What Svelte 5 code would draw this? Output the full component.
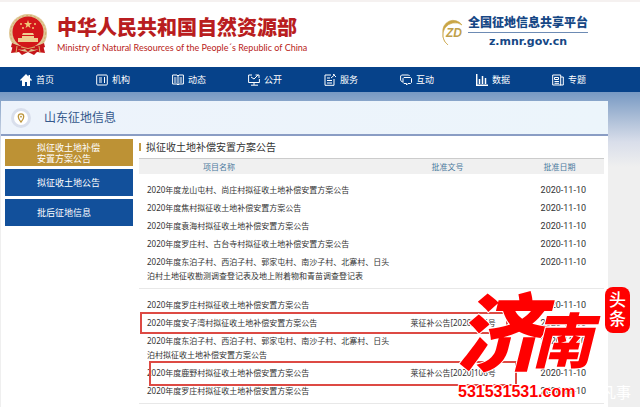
<script>
  const nav = [
    { label: '首页', icon: 'home' },
    { label: '机构', icon: 'org' },
    { label: '动态', icon: 'book' },
    { label: '公开', icon: 'screen' },
    { label: '服务', icon: 'service' },
    { label: '互动', icon: 'chat' },
    { label: '数据', icon: 'chart' },
    { label: '专题', icon: 'news' }
  ];
  const groups = [
    [
      ['2020年度龙山屯村、尚庄村拟征收土地补偿安置方案公告', ''],
      ['2020年度焦村拟征收土地补偿安置方案公告', ''],
      ['2020年度袁海村拟征收土地补偿安置方案公告', ''],
      ['2020年度罗庄村、古台寺村拟征收土地补偿安置方案公告', ''],
      ['2020年度东泊子村、西泊子村、郭家屯村、南沙子村、北寨村、日头泊村土地征收勘测调查登记表及地上附着物和青苗调查登记表', '']
    ],
    [
      ['2020年度罗庄村拟征收土地补偿安置方案公告', ''],
      ['2020年度安子湾村拟征收土地补偿安置方案公告', '莱征补公告[2020]105号'],
      ['2020年度东泊子村、西泊子村、郭家屯村、南沙子村、北寨村、日头泊村拟征收土地补偿安置方案公告', ''],
      ['2020年度鹿野村拟征收土地补偿安置方案公告', '莱征补公告[2020]106号'],
      ['2020年度罗庄村拟征收土地补偿安置方案公告', '']
    ]
  ];
</script>

<div class="page">
  <header>
    <svg class="emblem" viewBox="0 0 40 42" aria-hidden="true">
      <path d="M6 27 3 39l8-1 3 3 6-3 6 3 3-3 8 1-3-12z" fill="#c5161a" />
      <circle cx="20" cy="19" r="19" fill="#e0c795" />
      <circle cx="20" cy="19" r="17.500" fill="none" stroke="#cfae6e" stroke-dasharray="2 2" />
      <circle cx="20" cy="18" r="15.500" fill="#d3171a" />
      <path d="m20 6 1 3h3l-2.400 2 .9 3-2.500-1.800-2.500 1.800.9-3L16 9h3z" fill="#f0c878" />
      <g fill="#f0c878"><circle cx="13" cy="10" r="1" /><circle cx="27" cy="10" r="1" /><circle cx="15" cy="14" r="1" /><circle cx="25" cy="14" r="1" /></g>
      <path d="M15 19h10l1 2H14zM14 22h12v2h4v4H10v-4h4z" fill="#efcf91" />
      <path d="M4 29q16 8 32 0l1 4q-9 4-14 2l-3 3-3-3q-5 2-14-2z" fill="#c5161a" />
      <path d="M13 33q7 3 14 0M9 32l-1 7M31 32l1 7" fill="none" stroke="#dfae68" />
    </svg>
    <div class="ministry">
      <h1>中华人民共和国自然资源部</h1>
      <p>Ministry of Natural Resources of the People´s Republic of China</p>
    </div>
    <a class="platform" href="#platform">
      <svg viewBox="0 0 28 28" aria-hidden="true">
        <path d="M23 6A12 12 0 1 0 9 26Q3 21 4 14A10.500 10.500 0 0 1 23 6" fill="#c9a545" stroke="#c9a545" stroke-width=".6" />
        <text x="7" y="18">ZD</text>
      </svg>
      <span class="platform-text"><strong>全国征地信息共享平台</strong><span>z.mnr.gov.cn</span></span>
    </a>
  </header>

  <nav>
    {#each nav as item}
      <a href="#{item.icon}">
        <svg viewBox="0 0 12 12" aria-hidden="true">
          {#if item.icon === 'home'}
            <path d="M6 0 0 6l1 1 1-1v6h3V8h2v4h3V6l1 1 1-1-2-2V1H8.500v1.500z" fill="#fff" stroke="none" />
          {:else if item.icon === 'org'}
            <rect x=".7" y="1" width="10.600" height="10" rx="1" /><path d="M3 4h3M3 6h3M3 8h3M8.500 3v6" />
          {:else if item.icon === 'book'}
            <path d="M6 2v9M.6 1H5l1 1 1-1h4.400v9H7l-1 1-1-1H.6zM2 4h2.500M2 6h2.500M2 8h2.500M7.500 4H10M7.500 6H10M7.500 8H10" />
          {:else if item.icon === 'screen'}
            <path d="M4 1H.6v7.500h10.800V5M6 8.500V11M3 11.200h7M3 3l3 2 4-4M7.500 1H11v3" />
          {:else if item.icon === 'service'}
            <path d="M7 1H1v10.300h9V5M3 4h3M3 6.500h5M3 9h5M7 4l4-3.500M9 0l3 3" />
          {:else if item.icon === 'chat'}
            <path d="M2.500 7.500H1.500L.6 6V2l1-1h7l1 1M4 3.500h6.500l1 1v4l-1 1H8L6.500 11V9.500H4l-1-1v-4z" />
          {:else if item.icon === 'chart'}
            <path d="M.7 0v11.200H12M3.500 10V5M6.500 10V2M9.500 10V4" stroke-width="1.500" />
          {:else}
            <path d="M.7 1h8v10h-8zM9 3h2.300v8H8M2.500 3.500h4v2h-4zM2.500 7.500h4.500M2.500 9.300h4.500" />
          {/if}
        </svg>
        {item.label}
      </a>
    {/each}
  </nav>

  <div class="backdrop">
    <main>
      <div class="region">
        <span class="pin">
          <svg viewBox="0 0 8 11" aria-hidden="true"><path d="M4 10Q1 6.500 1 4a3 3 0 0 1 6 0Q7 6.500 4 10z" fill="#fff" stroke="#bd953b" stroke-width="1.400" /><circle cx="4" cy="4" r="1" fill="#bd953b" /></svg>
        </span>
        <h2>山东征地信息</h2>
      </div>
      <div class="columns">
        <aside>
          <a class="active" href="#plan">拟征收土地补偿<br />安置方案公告</a>
          <a href="#land">拟征收土地公告</a>
          <a href="#approved">批后征地信息</a>
        </aside>
        <section>
          <h3>拟征收土地补偿安置方案公告</h3>
          <table>
            <colgroup><col class="c-name" /><col class="c-no" /><col class="c-date" /></colgroup>
            <thead>
              <tr><th>项目名称</th><th>批准文号</th><th>批准日期</th></tr>
            </thead>
            {#each groups as rows}
              <tbody>
                {#each rows as [name, no]}
                  <tr><td><a href="#detail">{name}</a></td><td>{no}</td><td>2020-11-10</td></tr>
                {/each}
              </tbody>
            {/each}
          </table>
          <i class="mark first"></i>
          <i class="mark second"></i>
        </section>
      </div>
    </main>
    <div class="faint">凡事</div>
    <div class="brand">
      <span class="ji">济</span><span class="nan">南</span>
      <span class="site">531531531.com</span>
      <span class="seal">头条</span>
    </div>
  </div>
</div>

<style>
  :global(body) { margin: 0; background: #efefef; }
  .page { font-family: "Noto Sans", "Noto Sans CJK SC", sans-serif; color: #333; overflow: hidden; }
  a { color: inherit; text-decoration: none; }
  h1, h2, h3, p { margin: 0; font-weight: 400; }
  header { box-sizing: border-box; height: 67px; display: flex; align-items: center; padding: 0 52px 0 8px; background: #fff; border-top: 2px solid #f5f1f0; }
  .emblem { width: 40px; height: 42px; margin-right: 9px; }
  .ministry { flex: 1; white-space: nowrap; color: #b91d20; }
  h1 { font-size: 20px; line-height: 26px; font-weight: 900; }
  .ministry p { font-family: Lato, sans-serif; font-size: 9px; line-height: 14px; }
  .platform { display: flex; align-items: center; gap: 1px; color: #164785; margin-top: -4px; }
  .platform svg { flex: none; width: 28px; height: 28px; }
  .platform text { font: italic 700 12px "Liberation Sans", sans-serif; fill: #c0a04a; }
  .platform-text { display: flex; flex-direction: column; align-items: center; }
  .platform strong { font-size: 12px; line-height: 18px; font-weight: 900; border-bottom: 1px solid #6d8bb4; }
  .platform-text span { font: 700 11px/18px "DejaVu Sans", sans-serif; }
  nav { display: grid; grid-template-columns: repeat(8, 1fr); height: 25px; padding: 0 12px 0 20px; background: #06428a; color: #fff; font-size: 9px; }
  nav a { display: flex; align-items: center; gap: 4px; }
  nav svg { width: 12px; height: 12px; fill: none; stroke: #fff; stroke-width: 1; }
  .backdrop { position: relative; padding: 9px 32px 0 1px; background: #efefef linear-gradient(#7799c3, #a9bcd6 25px, #d9deea 50px, #efefef 75px) no-repeat 0 0 / 100% 75px; }
  main { background: #fff; padding-bottom: 3px; }
  .region { display: flex; align-items: center; gap: 13px; height: 33px; padding-left: 10px; background: linear-gradient(90deg, #edf3fb, #ecf5fb); border-bottom: 2px solid #8a9dc4; }
  .pin { display: grid; place-items: center; box-sizing: border-box; width: 20px; height: 20px; border: 3px solid #d9dfec; border-radius: 50%; background: #fff; }
  .pin svg { width: 8px; height: 10px; }
  h2 { font-size: 12px; line-height: 18px; color: #35598c; }
  .columns { display: flex; padding: 3px 4px 0; gap: 6px; }
  aside { flex: 0 0 128px; display: flex; flex-direction: column; gap: 3px; }
  aside a { box-sizing: border-box; min-height: 27px; display: flex; align-items: center; padding-left: 32px; background: #12509b; color: #fff; font-size: 9px; line-height: 11px; }
  aside .active { background: #bd9235; }
  section { flex: 1; min-width: 0; position: relative; }
  h3 { font-size: 10px; line-height: 16px; margin-bottom: 3px; display: flex; align-items: center; gap: 5px; }
  h3::before { content: ""; width: 2px; height: 8px; background: #c49c45; }
  table { width: 100%; table-layout: fixed; border-spacing: 0; font-size: 8px; line-height: 14px; }
  .c-name { width: 56%; }
  .c-no { width: 28%; }
  .c-date { width: 16%; }
  th { height: 15px; padding: 0 0 0 64px; font-weight: 400; text-align: left; color: #4c7a9e; background: #f0f0f0; border-top: 1px solid #ccc; }
  th:nth-child(2) { padding-left: 32px; }
  th:nth-child(3) { padding-left: 14px; }
  td { padding: 2px 4px 2px 8px; vertical-align: top; }
  td:nth-child(2) { padding-left: 11px; }
  td:nth-child(3) { padding: 2px 0 2px 11px; font-family: Roboto, sans-serif; font-size: 9px; }
  tbody tr:first-child td { padding-top: 9px; }
  tbody tr:last-child td { padding-bottom: 5px; border-bottom: 1px solid #e8e8e8; }
  .mark { position: absolute; box-sizing: border-box; width: 368px; border: 2px solid #dd4a44; }
  .first { left: 1px; top: 173px; height: 22px; }
  .second { left: 10px; top: 222px; height: 25px; }
  .faint { position: absolute; right: 9px; bottom: 5px; color: #fff; font-size: 15px; line-height: 20px; }
  .brand { position: absolute; right: 0; bottom: 0; width: 190px; height: 125px; color: #f00; font-weight: 900; -webkit-text-stroke: 2px #fff; paint-order: stroke fill; }
  .brand span { position: absolute; white-space: nowrap; }
  .ji { left: 6px; top: 0; font-size: 86px; line-height: 100px; font-style: italic; }
  .nan { left: 82px; top: 24px; font-size: 60px; line-height: 68px; font-style: italic; }
  .brand .site { left: 8px; bottom: 6px; font: 700 16px/18px "Liberation Sans", sans-serif; }
  .brand .seal { right: 10px; top: 5px; width: 25px; height: 46px; box-sizing: border-box; padding: 3px 4px 0; border-radius: 8px; background: #f00; color: #fff; font-size: 17px; line-height: 19px; font-weight: 500; white-space: normal; -webkit-text-stroke: 0; }
</style>
